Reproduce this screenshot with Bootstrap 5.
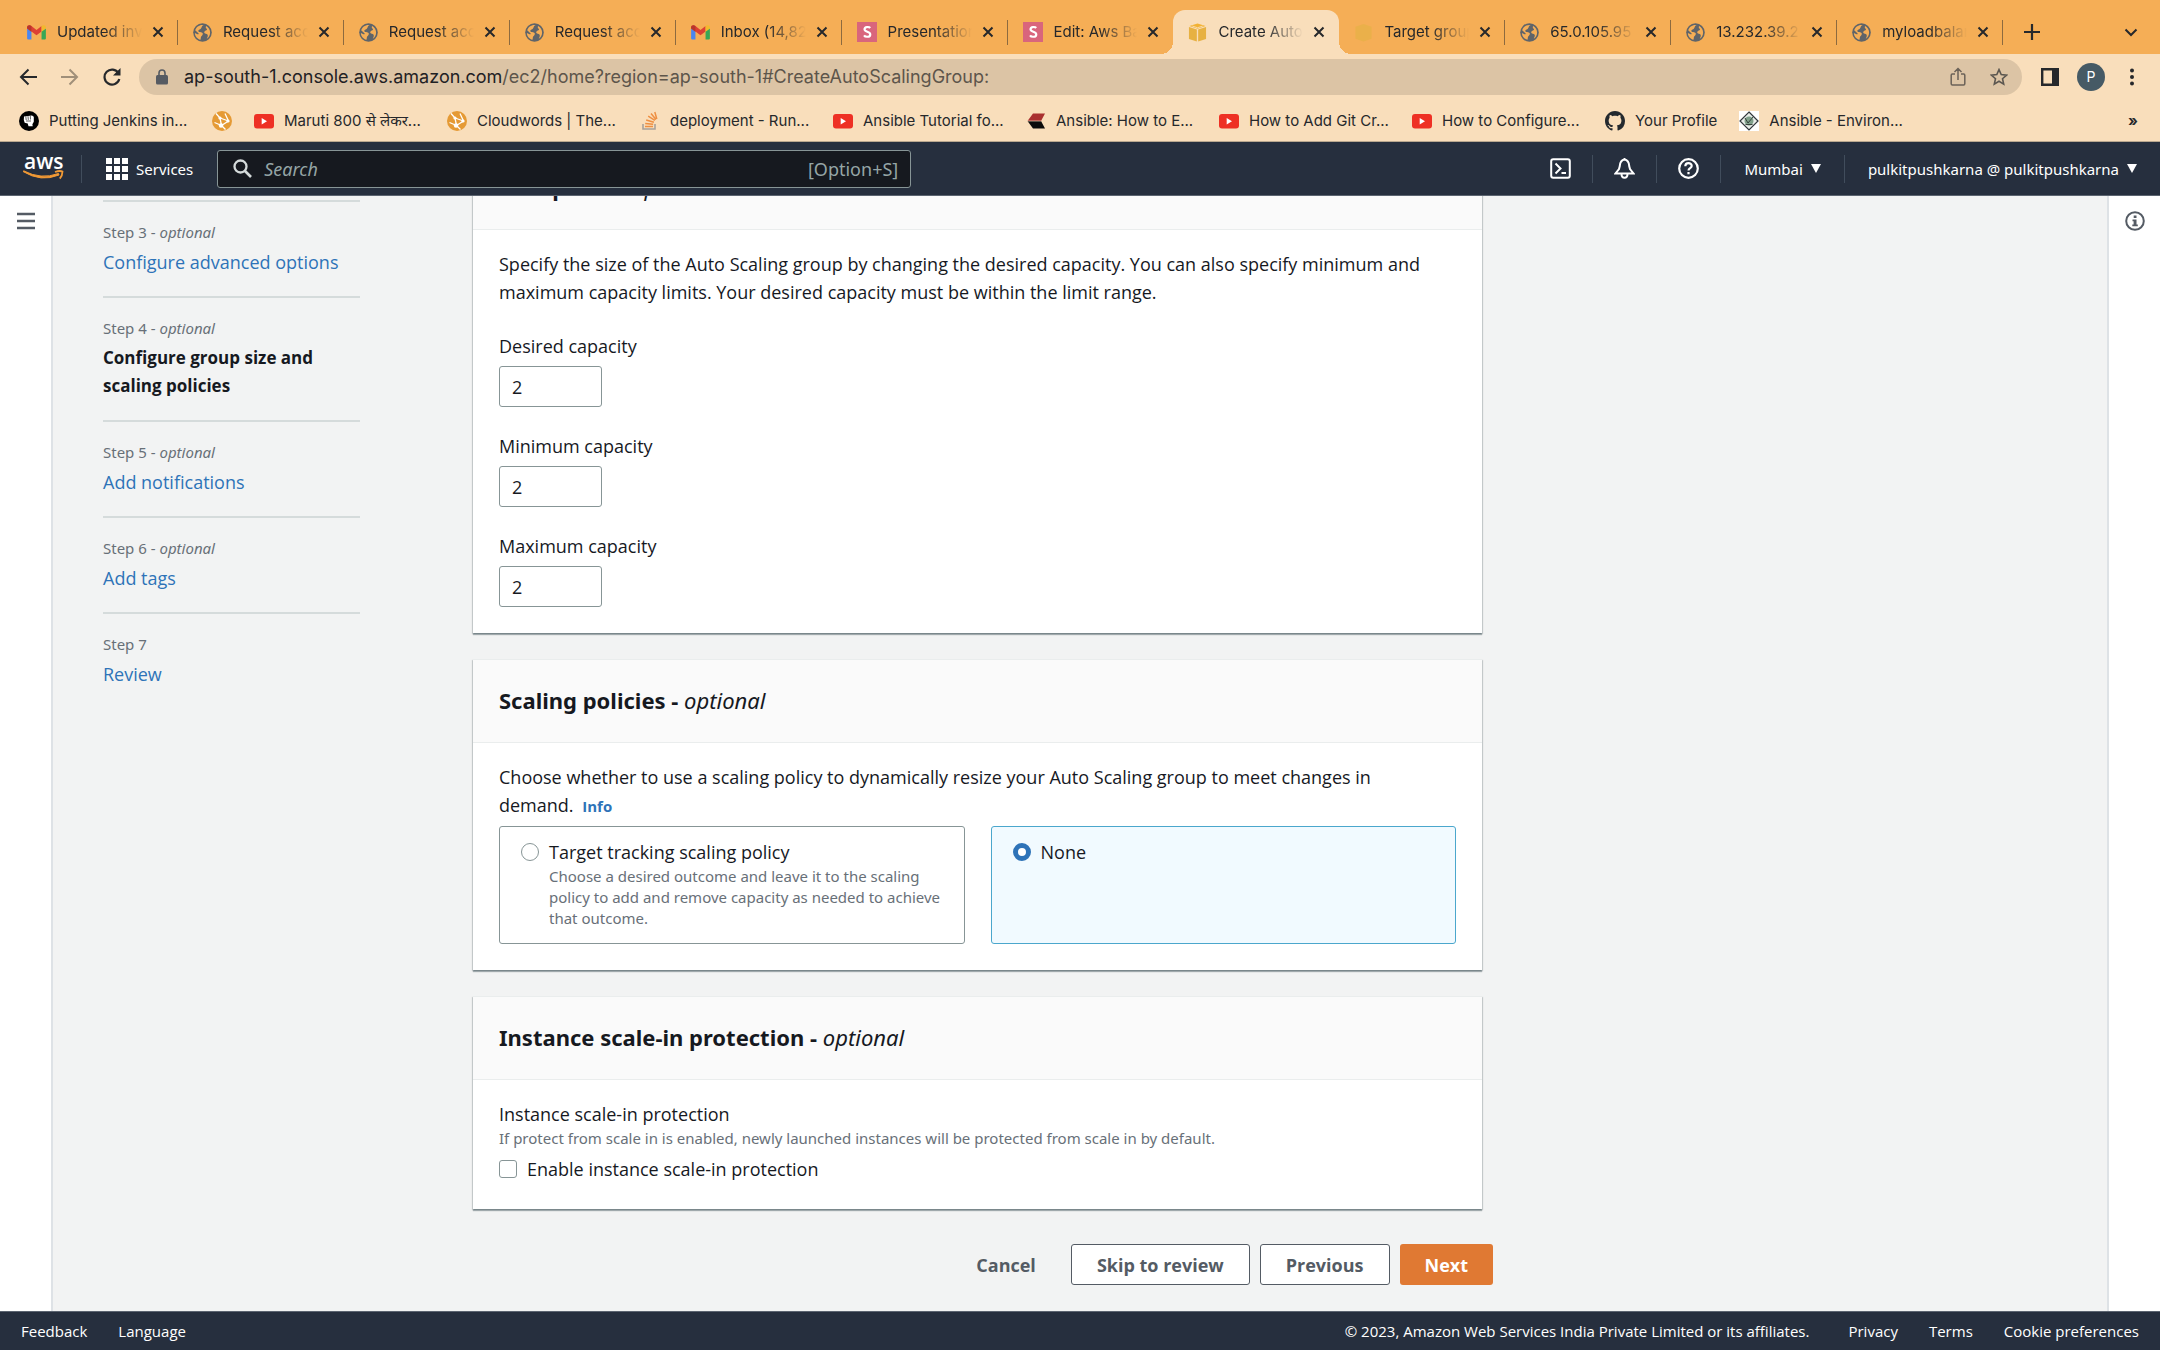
<!DOCTYPE html>
<html lang="en">
<head>
<meta charset="utf-8">
<meta name="viewport" content="width=device-width, initial-scale=1">
<title>Create Auto Scaling group</title>
<link href="https://cdn.jsdelivr.net/npm/bootstrap@5.3.0/dist/css/bootstrap.min.css" rel="stylesheet">
<style>
  :root { --ember: "Open Sans", "Noto Sans", sans-serif; --ember-small: "Noto Sans", "Open Sans", sans-serif; --sys: Inter, Roboto, "Noto Sans", sans-serif; }
  body { font-family: var(--ember); font-size: 18px; line-height: 28px; color: #16191f; background: #f2f3f3; }
  button { border: 0; background: none; padding: 0; color: inherit; }
  svg { display: block; flex: none; }

  /* browser chrome */
  .chrome { font-family: var(--sys); font-size: 15px; line-height: 20px; color: #26282b; }
  .tabstrip { height: 54px; background: #f5ae56; padding: 10px 18px 0 12px; }
  .tab-set { flex: 1; max-width: calc(100% - 139px); }
  .new-tab { margin-left: 21px; }
  .btab { flex: 1 1 0; min-width: 0; height: 44px; padding: 0 14px 0 15px; position: relative; color: inherit; }
  .btab::after { content: ""; position: absolute; right: 0; top: 10px; width: 1px; height: 25px; background: #8c6a3f; }
  .btab.plain::after { display: none; }
  .btab.current { background: #f9debb; border-radius: 12px 12px 0 0; }
  .btab.current::before, .btab.current::after { content: ""; display: block; position: absolute; top: auto; bottom: 0; width: 12px; height: 12px; }
  .btab.current::before { left: -12px; background: radial-gradient(circle at 0 0, transparent 12px, #f9debb 12px); }
  .btab.current::after { right: -12px; background: radial-gradient(circle at 100% 0, transparent 12px, #f9debb 12px); }
  .btab-text { flex: 1; min-width: 0; overflow: hidden; white-space: nowrap; margin: 0 10px 0 11px; color: inherit; text-decoration: none;
    -webkit-mask-image: linear-gradient(90deg, #000 55%, transparent); mask-image: linear-gradient(90deg, #000 55%, transparent); }
  .toolbar { background: #f9debb; height: 46px; padding: 0 25px 0 19px; }
  .omnibox { flex: 1; height: 36px; border-radius: 18px; background: #dcc4a5; padding: 0 14px 0 17px; margin: 0 19px 0 18px; }
  .url { font-size: 18px; color: #5d554b; flex: 1; }
  .url b { font-weight: 400; color: #1f2124; }
  .avatar { width: 28px; height: 28px; border-radius: 50%; background: #465a65; color: #fff; font-size: 14px; margin-left: 18px; }
  .bookmarks { background: #f9debb; height: 42px; border-bottom: 1px solid #b9a88f; padding: 0 22px 0 19px; gap: 22px; }
  .bookmarks a { color: inherit; text-decoration: none; gap: 10px; white-space: nowrap; }
  .bm-text { width: 141px; }
  .bm-text.fit { width: auto; }

  /* console header */
  .console { background: #262f3e; height: 54px; color: #fff; font-family: var(--ember-small); font-size: 15px; font-weight: 500; line-height: 24px; border-bottom: 1px solid #5b6470; padding: 0 21px 0 23px; }
  .console .rule { width: 1px; height: 28px; background: #414d5c; }
  .account { gap: 21px; }
  .account .menu { margin: 0 2px; }
  .search { width: 694px; height: 38px; background: #16191f; border: 1px solid #879596; border-radius: 3px; padding: 0 12px 0 15px; color: #95a5a6; font-size: 18px; font-weight: 400; }
  .search input { border: 0; background: none; outline: 0; padding: 0; flex: 1; min-width: 0; }
  .search input::placeholder { color: #95a5a6; font-style: italic; opacity: 1; }
  .tri { width: 0; border: 5px solid transparent; border-top: 9px solid #fff; border-bottom: 0; }

  /* page */
  .rail { width: 53px; background: #fff; flex: none; padding-top: 15px; }
  .steps { width: 257px; flex: none; padding-top: 4px; margin: 0 113px 0 50px; }
  .steps li { border-top: 2px solid #d5dbdb; padding: 18px 0 20px; }
  .steps li:last-child { padding-bottom: 0; }
  .steps small { display: block; font-family: var(--ember-small); font-size: 15px; line-height: 24px; margin-bottom: 4px; color: #687078; }
  .steps strong { display: block; font-size: 17px; }
  .steps a, .info { color: #2e73b8; text-decoration: none; }
  .info { font-size: 15px; font-weight: 700; margin-left: 4px; }
  .form-col { width: 1020px; margin-top: -50px; }
  .panel { background: #fff; margin: 0 11px 26px 0; box-shadow: 0 2px 1px 0 rgba(0,28,36,.3), 1px 1px 1px 0 rgba(0,28,36,.15), -1px 1px 1px 0 rgba(0,28,36,.15); }
  .panel-head { background: #fafafa; border-bottom: 1px solid #eaeded; padding: 24px 26px 25px; box-shadow: inset 0 1px 0 #eaeded; }
  .panel-head h2 { font-family: var(--ember-small); font-size: 22px; line-height: 34px; font-weight: 700; margin: 0; }
  .panel-head em { font-weight: 400; }
  .panel-body { padding: 20px 26px 26px; }
  .panel-body p { margin: 0; padding-right: 26px; }
  .cap { gap: 23px; }
  .cap label { display: block; line-height: 32px; margin-bottom: 4px; }
  .cap input { display: block; width: 103px; height: 41px; border: 1px solid #879596; border-radius: 3px; padding: 0 12px; background: #fff; color: inherit; }
  .hint { font-family: var(--ember-small); font-size: 15px; line-height: 21px; color: #687078; }
  .tiles { gap: 26px; margin-top: 6px; }
  .tile { flex: 1 1 0; min-height: 118px; border: 1px solid #879596; border-radius: 3px; padding: 11px 21px; gap: 10px; }
  .tile.on { background: #f1faff; border-color: #4ba7cd; }
  .tick { appearance: none; width: 18px; height: 18px; flex: none; margin: 5px 0 0; border: 1px solid #879596; background: #fff; border-radius: 3px; }
  .tick[type=radio] { border-radius: 50%; }
  .tick[type=radio]:checked { border: 5px solid #2e73b8; }
  .protect { gap: 10px; margin-top: 6px; }
  .actions { padding-top: 9px; gap: 10px; }
  .act { height: 41px; padding: 0 25px; font-weight: 700; border-radius: 3px; color: #545b64; }
  .act.line { border: 1px solid #545b64; background: #fff; }
  .act.go { background: #e07933; color: #fff; }
  .foot { background: #262f3e; height: 39px; font-size: 15px; font-weight: 500; border-top: 1px solid #5b6470; padding: 0 21px; gap: 31px; }
  .foot a, .foot span { color: #fff; text-decoration: none; line-height: 38px; }
</style>
</head>
<body class="vh-100 d-flex flex-column overflow-hidden">

<!-- shared icon shapes -->
<svg width="0" height="0" class="position-absolute" aria-hidden="true">
  <symbol id="gmail" viewBox="0 0 20 16"><path d="M0 2v12.500q0 1 1.200 1H4.600V7L0 3.500z" fill="#4a86f0"/><path d="M20 2v12.500q0 1-1.200 1H15.400V7L20 3.500z" fill="#38a756"/><path d="M0 2.500C0 .2 2.600-.6 4.600 1L10 5.200 15.400 1v5.800L10 11 4.600 6.800V7.300L0 3.800z" fill="#dd4034"/><path d="M15.400 1C17.400-.6 20 .2 20 2.500v1.300l-4.600 3.500z" fill="#f2b92c"/><path d="M0 2.500C0 .2 2.600-.6 4.600 1v6.200L0 3.800z" fill="#b8352b"/></symbol>
  <symbol id="globe" viewBox="0 0 20 20"><circle cx="10" cy="10" r="9.800" fill="#5f6469"/><path d="M11.500 2.200C8.500 3 9.800 5 8 6.200c-1.500 1-2.800.7-2.300 2.600.4 1.400 2.600.5 4 1.400 1.500 1 .2 2.600-.9 3.700-.8.800-.4 2.300-.9 3.800C4.300 16.700 2 13.800 2 10.500l2.700 1.300c1 .4 1.800-.3 1-1.100L2.300 7.600C3.400 4.200 6.500 1.600 11.500 2.200zM14 3.200c2.400 1.400 4 3.800 4 6.800 0 3-1.400 5.200-3.500 6.600.6-1.700 1.700-3.200.7-4.600-.8-1-2.400-.5-3.200-1.600-.7-1.200.5-2.300 1.700-2.600 1.300-.4 1.400-1 .4-1.900C13.300 5 13.200 4 14 3.200z" fill="#f5ae56"/></symbol>
  <symbol id="ess" viewBox="0 0 21 21"><path d="M0 0h21v21H0z" fill="#d9657c"/><path d="M13.800 6.300C12.800 4.900 8 4.600 7.900 7.600c0 3.200 6 2 6 5.400 0 3.200-5.200 3.100-6.500 1" fill="none" stroke="#fff" stroke-width="2.300"/></symbol>
  <symbol id="cube" viewBox="0 0 20 20"><path d="M10 .5l8.500 2.700L10 6 1.500 3.200z" fill="#f2b234"/><path d="M1 4.300l8.300 2.600v12.600L1 16.800zM19 4.300l-8.300 2.600v12.600l8.300-2.700z" fill="#e7b142"/><path d="M4.500 3.200L10 5l5.500-1.800M10 6.500V20" stroke="#f9debb" stroke-width=".9" fill="none"/></symbol>
  <symbol id="cubefaint" viewBox="0 0 20 20"><path d="M10 1l8.500 3v12.500L10 19.500l-8.500-3V4z" fill="#eab04a"/></symbol>
  <symbol id="ex" viewBox="0 0 12 12"><path d="M1.500 1.500l9 9m0-9l-9 9" stroke="#26282b" stroke-width="2"/></symbol>
  <symbol id="yt" viewBox="0 0 20 20"><rect y="3" width="20" height="14.500" rx="3" fill="#ee3024"/><path d="M7.700 6.900v6.600l5.300-3.300z" fill="#fff"/></symbol>
  <symbol id="net" viewBox="0 0 20 20"><circle cx="10" cy="10" r="10" fill="#e59a35"/><path d="M4 2.500l4 4.500 1.500 7.500L16.500 10 13 2.500M8 7l8.500 3M9.500 14.500L2.500 11.500M9.500 14.500l4 4" stroke="#fff" stroke-width="1.300" fill="none"/><circle cx="9" cy="14.500" r="2.200" fill="#fff"/><circle cx="16" cy="10" r="1.600" fill="#fff"/><circle cx="8" cy="7" r="1.600" fill="#fff"/></symbol>
</svg>

<header class="chrome flex-shrink-0">
  <nav class="tabstrip d-flex align-items-center" aria-label="Tabs">
    <div class="tab-set d-flex">
      <div class="btab d-flex align-items-center"><svg width="19" height="15"><use href="#gmail"/></svg><a href="#" class="btab-text">Updated invi</a><button aria-label="Close"><svg width="12" height="12"><use href="#ex"/></svg></button></div>
      <div class="btab d-flex align-items-center"><svg width="19" height="19"><use href="#globe"/></svg><a href="#" class="btab-text">Request acce</a><button aria-label="Close"><svg width="12" height="12"><use href="#ex"/></svg></button></div>
      <div class="btab d-flex align-items-center"><svg width="19" height="19"><use href="#globe"/></svg><a href="#" class="btab-text">Request acce</a><button aria-label="Close"><svg width="12" height="12"><use href="#ex"/></svg></button></div>
      <div class="btab d-flex align-items-center"><svg width="19" height="19"><use href="#globe"/></svg><a href="#" class="btab-text">Request acce</a><button aria-label="Close"><svg width="12" height="12"><use href="#ex"/></svg></button></div>
      <div class="btab d-flex align-items-center"><svg width="19" height="15"><use href="#gmail"/></svg><a href="#" class="btab-text">Inbox (14,82</a><button aria-label="Close"><svg width="12" height="12"><use href="#ex"/></svg></button></div>
      <div class="btab d-flex align-items-center"><svg width="20" height="20"><use href="#ess"/></svg><a href="#" class="btab-text">Presentation</a><button aria-label="Close"><svg width="12" height="12"><use href="#ex"/></svg></button></div>
      <div class="btab plain d-flex align-items-center"><svg width="20" height="20"><use href="#ess"/></svg><a href="#" class="btab-text">Edit: Aws Ba</a><button aria-label="Close"><svg width="12" height="12"><use href="#ex"/></svg></button></div>
      <div class="btab current d-flex align-items-center"><svg width="19" height="19"><use href="#cube"/></svg><a href="#" class="btab-text" aria-current="page">Create Auto</a><button aria-label="Close"><svg width="12" height="12"><use href="#ex"/></svg></button></div>
      <div class="btab d-flex align-items-center"><svg width="19" height="19"><use href="#cubefaint"/></svg><a href="#" class="btab-text">Target group</a><button aria-label="Close"><svg width="12" height="12"><use href="#ex"/></svg></button></div>
      <div class="btab d-flex align-items-center"><svg width="19" height="19"><use href="#globe"/></svg><a href="#" class="btab-text">65.0.105.95</a><button aria-label="Close"><svg width="12" height="12"><use href="#ex"/></svg></button></div>
      <div class="btab d-flex align-items-center"><svg width="19" height="19"><use href="#globe"/></svg><a href="#" class="btab-text">13.232.39.2</a><button aria-label="Close"><svg width="12" height="12"><use href="#ex"/></svg></button></div>
      <div class="btab d-flex align-items-center"><svg width="19" height="19"><use href="#globe"/></svg><a href="#" class="btab-text">myloadbalan</a><button aria-label="Close"><svg width="12" height="12"><use href="#ex"/></svg></button></div>
    </div>
    <button class="new-tab" aria-label="New tab"><svg width="16" height="16" viewBox="0 0 16 16"><path d="M8 0v16M0 8h16" stroke="#26282b" stroke-width="2.200"/></svg></button>
    <button class="ms-auto me-1" aria-label="Search tabs"><svg width="14" height="9" viewBox="0 0 14 9"><path d="M1.500 1.500L7 7l5.500-5.500" stroke="#26282b" stroke-width="2" fill="none"/></svg></button>
  </nav>

  <div class="toolbar d-flex align-items-center">
    <button aria-label="Back"><svg width="18" height="18" viewBox="0 0 18 18"><path d="M18 9H2M9.500 1.500L2 9l7.500 7.500" stroke="#26282b" stroke-width="2" fill="none"/></svg></button>
    <button class="ms-4" aria-label="Forward"><svg width="18" height="18" viewBox="0 0 18 18"><path d="M0 9h16M8.500 1.500L16 9l-7.500 7.500" stroke="#a08f79" stroke-width="2" fill="none"/></svg></button>
    <button class="ms-4" aria-label="Reload"><svg width="18" height="18" viewBox="0 0 18 18"><path d="M15.500 5.200A7.500 7.500 0 1 0 16.300 11" stroke="#26282b" stroke-width="2.200" fill="none"/><path d="M17.500 0v7.500H10z" fill="#26282b"/></svg></button>
    <div class="omnibox d-flex align-items-center">
      <svg width="12" height="16" viewBox="0 0 12 16"><rect y="6" width="12" height="9.500" rx="1.500" fill="#565b62"/><path d="M3 7V4a3 3 0 0 1 6 0v3" fill="none" stroke="#565b62" stroke-width="1.600"/></svg>
      <a href="#" class="url text-decoration-none ms-3 text-truncate"><b>ap-south-1.console.aws.amazon.com</b>/ec2/home?region=ap-south-1#CreateAutoScalingGroup:</a>
      <button aria-label="Share"><svg width="16" height="20" viewBox="0 0 16 20"><path d="M5 7H2.300Q1.200 7 1.200 8.200v8.600q0 1.200 1.200 1.200h11.200q1.200 0 1.200-1.200V8.200Q14.800 7 13.700 7H11M8 13V1.500M4.500 5L8 1.500 11.500 5" fill="none" stroke="#6b6258" stroke-width="1.500"/></svg></button>
      <button class="ms-4" aria-label="Bookmark this tab"><svg width="18" height="18" viewBox="0 0 18 18"><path d="M9 1.600l2.200 5 5.400.500-4.100 3.600 1.200 5.400L9 13.300l-4.700 2.800 1.200-5.400L1.400 7.100l5.400-.5z" fill="none" stroke="#5c5750" stroke-width="1.600"/></svg></button>
    </div>
    <button aria-label="Side panel"><svg width="18" height="18" viewBox="0 0 18 18"><path d="M1.200 1.200h15.600v15.600H1.200z" fill="none" stroke="#26282b" stroke-width="2.400"/><path d="M11 1h6v16h-6z" fill="#26282b"/></svg></button>
    <button class="avatar d-flex align-items-center justify-content-center">P</button>
    <button class="ms-4" aria-label="Menu"><svg width="6" height="18" viewBox="0 0 6 18" fill="#26282b"><circle cx="3" cy="2.500" r="2"/><circle cx="3" cy="9" r="2"/><circle cx="3" cy="15.500" r="2"/></svg></button>
  </div>

  <nav class="bookmarks d-flex align-items-center" aria-label="Bookmarks">
    <a href="#" class="d-flex align-items-center"><svg width="20" height="20" viewBox="0 0 20 20"><circle cx="10" cy="10" r="10"/><path d="M5 5.500l8-1 1.800 1.300v5l-1.400 2.400.300 2H9.500l-.8-2.700-3-.8-.9-2.800z" fill="#fff"/><path d="M6.800 5.500l.4 3.500M9 5.200l.3 3.700M11.300 5l.2 3.500M7 10h5" stroke="#000" stroke-width=".6"/></svg><span class="bm-text">Putting Jenkins in...</span></a>
    <a href="#" aria-label="Cloudwords"><svg width="20" height="20"><use href="#net"/></svg></a>
    <a href="#" class="d-flex align-items-center"><svg width="20" height="20"><use href="#yt"/></svg><span class="bm-text">Maruti 800 से लेकर...</span></a>
    <a href="#" class="d-flex align-items-center"><svg width="20" height="20"><use href="#net"/></svg><span class="bm-text">Cloudwords | The...</span></a>
    <a href="#" class="d-flex align-items-center"><svg width="20" height="20" viewBox="0 0 20 20"><path d="M3 13v5h12v-5" fill="none" stroke="#a8a19a" stroke-width="1.600"/><path d="M5 15.500h8M5.200 12.500l8 .8M6.200 9l7.700 2.200M8.200 5.200l6.700 4.200M11 2.500l5 6M14.800 1l2 7" stroke="#ee8f42" stroke-width="1.500"/></svg><span class="bm-text">deployment - Run...</span></a>
    <a href="#" class="d-flex align-items-center"><svg width="20" height="20"><use href="#yt"/></svg><span class="bm-text">Ansible Tutorial fo...</span></a>
    <a href="#" class="d-flex align-items-center"><svg width="20" height="20" viewBox="0 0 20 20"><path d="M7 2.500h12L15 10H1.500z" fill="#a9302f"/><path d="M1.500 10H15l4 7.500H7z" fill="#0c0c0c"/><path d="M1 10h14" stroke="#f9debb" stroke-width=".7"/></svg><span class="bm-text">Ansible: How to E...</span></a>
    <a href="#" class="d-flex align-items-center"><svg width="20" height="20"><use href="#yt"/></svg><span class="bm-text">How to Add Git Cr...</span></a>
    <a href="#" class="d-flex align-items-center"><svg width="20" height="20"><use href="#yt"/></svg><span class="bm-text">How to Configure...</span></a>
    <a href="#" class="d-flex align-items-center"><svg width="20" height="20" viewBox="0 0 16 16"><path fill="#24292e" d="M8 0C3.580 0 0 3.580 0 8c0 3.540 2.290 6.530 5.470 7.590.4.070.55-.17.55-.38 0-.19-.01-.82-.01-1.490-2.010.37-2.530-.49-2.690-.94-.09-.23-.48-.94-.82-1.130-.28-.15-.68-.52-.01-.53.63-.01 1.080.58 1.230.82.72 1.210 1.870.87 2.330.66.07-.52.28-.87.51-1.070-1.780-.2-3.640-.89-3.640-3.950 0-.87.31-1.590.82-2.150-.08-.2-.36-1.020.08-2.120 0 0 .67-.21 2.200.82.64-.18 1.320-.27 2-.27s1.360.09 2 .27c1.530-1.040 2.200-.82 2.200-.82.44 1.100.16 1.920.08 2.120.51.56.82 1.270.82 2.150 0 3.070-1.870 3.750-3.650 3.950.29.25.54.73.54 1.480 0 1.070-.01 1.930-.01 2.200 0 .21.15.46.55.38A8.010 8.010 0 0 0 16 8c0-4.420-3.580-8-8-8z"/></svg><span class="bm-text fit">Your Profile</span></a>
    <a href="#" class="d-flex align-items-center"><svg width="20" height="20" viewBox="0 0 20 20"><path d="M0 0h20v20H0z" fill="#fff"/><path d="M10 1l9 9-9 9-9-9z" fill="#e8ece8" stroke="#30363a" stroke-width="1.200"/><circle cx="10" cy="10" r="4.500" fill="#7fa08a"/><path d="M6 7l3 5 5-6M6.500 13.500h7" stroke="#39443d" fill="none"/></svg><span class="bm-text">Ansible - Environ...</span></a>
    <button class="ms-auto fw-bold" aria-label="More bookmarks">»</button>
  </nav>
</header>

<div class="console d-flex align-items-center flex-shrink-0">
  <a href="#" aria-label="AWS"><svg width="42" height="30" viewBox="0 0 42 30"><text x="1" y="15" font-family="Open Sans" font-size="21" font-weight="600" fill="#fff">aws</text><path d="M0 17.500Q18 28.500 36 21l-.5-1.500Q18 26 .6 16.800z" fill="#f29a35" stroke="#f29a35"/><path d="M32 18q5-1.800 7.500-.4 0 4-2.700 7" stroke="#f29a35" stroke-width="1.800" fill="none"/></svg></a>
  <span class="rule mx-3"></span>
  <button class="d-flex align-items-center ms-2"><svg width="22" height="22" viewBox="0 0 22 22" fill="#fff"><path d="M0 0h6v6H0zM8 0h6v6H8zM16 0h6v6h-6zM0 8h6v6H0zM8 8h6v6H8zM16 8h6v6h-6zM0 16h6v6H0zM8 16h6v6H8zM16 16h6v6h-6z"/></svg><span class="ms-2">Services</span></button>
  <label class="search d-flex align-items-center ms-4">
    <svg width="19" height="19" viewBox="0 0 19 19"><circle cx="7.500" cy="7.500" r="6" fill="none" stroke="#d5dbdb" stroke-width="2.300"/><path d="M12 12l6 6" stroke="#d5dbdb" stroke-width="2.600"/></svg>
    <input class="ms-2 ps-1" type="text" placeholder="Search" aria-label="Search">
    <span>[Option+S]</span>
  </label>
  <div class="account d-flex align-items-center ms-auto">
    <button aria-label="CloudShell"><svg width="21" height="21" viewBox="0 0 21 21" fill="none" stroke="#fff" stroke-width="2"><rect x="1.200" y="1.200" width="18.600" height="18.600" rx="2"/><path d="M5.500 5.500l5 5-5 5M11.500 15h4.500"/></svg></button>
    <span class="rule"></span>
    <button aria-label="Notifications"><svg width="21" height="21" viewBox="0 0 21 21" fill="none" stroke="#fff" stroke-width="2"><path d="M10.500 1.500c-3 .5-4.500 3-4.700 6.500L5 11l-3.500 4.500h18L16 11l-.8-3c-.2-3.500-1.700-6-4.700-6.500zM10.500 0v2M7.500 16c0 5 6 5 6 0"/></svg></button>
    <span class="rule"></span>
    <button aria-label="Help"><svg width="21" height="21" viewBox="0 0 21 21" fill="none" stroke="#fff" stroke-width="2.200"><circle cx="10.500" cy="10.500" r="9.300"/><path d="M7.300 8.300c0-4.200 6.400-4 6.400-.3 0 2.200-3.200 2.200-3.200 4.500M10.500 14v2.300"/></svg></button>
    <span class="rule"></span>
    <button class="menu d-flex align-items-center gap-2">Mumbai <span class="tri"></span></button>
    <span class="rule"></span>
    <button class="menu d-flex align-items-center gap-2">pulkitpushkarna @ pulkitpushkarna <span class="tri"></span></button>
  </div>
</div>

<div class="d-flex flex-grow-1 overflow-hidden">
  <aside class="rail border-end border-2 d-flex justify-content-center align-items-start">
    <button aria-label="Open menu"><svg width="18" height="20" viewBox="0 0 18 20"><path d="M0 3h18M0 10h18M0 17h18" stroke="#545b64" stroke-width="2.400"/></svg></button>
  </aside>

  <main class="flex-grow-1 d-flex align-items-start">
    <ol class="steps list-unstyled">
      <li><small>Step 3 - <em>optional</em></small><a href="#">Configure advanced options</a></li>
      <li><small>Step 4 - <em>optional</em></small><strong>Configure group size and scaling policies</strong></li>
      <li><small>Step 5 - <em>optional</em></small><a href="#">Add notifications</a></li>
      <li><small>Step 6 - <em>optional</em></small><a href="#">Add tags</a></li>
      <li><small>Step 7</small><a href="#">Review</a></li>
    </ol>

    <form class="form-col">
      <section class="panel">
        <div class="panel-head"><h2>Group size - <em>optional</em></h2></div>
        <div class="panel-body">
          <p>Specify the size of the Auto Scaling group by changing the desired capacity. You can also specify minimum and maximum capacity limits. Your desired capacity must be within the limit range.</p>
          <div class="cap d-flex flex-column mt-4">
            <div><label for="c1">Desired capacity</label><input id="c1" type="text" value="2"></div>
            <div><label for="c2">Minimum capacity</label><input id="c2" type="text" value="2"></div>
            <div><label for="c3">Maximum capacity</label><input id="c3" type="text" value="2"></div>
          </div>
        </div>
      </section>

      <section class="panel">
        <div class="panel-head"><h2>Scaling policies - <em>optional</em></h2></div>
        <div class="panel-body">
          <p>Choose whether to use a scaling policy to dynamically resize your Auto Scaling group to meet changes in demand. <a href="#" class="info">Info</a></p>
          <div class="tiles d-flex">
            <label class="tile d-flex align-items-start"><input class="tick" type="radio" name="pol"><span>Target tracking scaling policy<span class="hint d-block">Choose a desired outcome and leave it to the scaling policy to add and remove capacity as needed to achieve that outcome.</span></span></label>
            <label class="tile on d-flex align-items-start"><input class="tick" type="radio" name="pol" checked><span>None</span></label>
          </div>
        </div>
      </section>

      <section class="panel">
        <div class="panel-head"><h2>Instance scale-in protection - <em>optional</em></h2></div>
        <div class="panel-body">
          <p>Instance scale-in protection</p>
          <p class="hint">If protect from scale in is enabled, newly launched instances will be protected from scale in by default.</p>
          <label class="protect d-flex align-items-start"><input class="tick" type="checkbox"><span>Enable instance scale-in protection</span></label>
        </div>
      </section>

      <div class="actions d-flex justify-content-end">
        <button type="button" class="act">Cancel</button>
        <button type="button" class="act line">Skip to review</button>
        <button type="button" class="act line">Previous</button>
        <button type="button" class="act go">Next</button>
      </div>
    </form>
  </main>

  <aside class="rail border-start border-2 d-flex justify-content-center align-items-start">
    <button aria-label="Info panel"><svg width="20" height="20" viewBox="0 0 20 20"><circle cx="10" cy="10" r="8.800" fill="none" stroke="#545b64" stroke-width="2"/><path d="M8.700 4.500h2.800v2.400H8.700zM7.500 8.500h4v5h1.300v1.700H7.300v-1.700h1.300v-3.300H7.500z" fill="#545b64"/></svg></button>
  </aside>
</div>

<footer class="foot d-flex align-items-center flex-shrink-0">
  <a href="#">Feedback</a><a href="#">Language</a>
  <span class="ms-auto me-2">© 2023, Amazon Web Services India Private Limited or its affiliates.</span>
  <a href="#">Privacy</a><a href="#">Terms</a><a href="#">Cookie preferences</a>
</footer>
<script src="https://cdn.jsdelivr.net/npm/bootstrap@5.3.0/dist/js/bootstrap.bundle.min.js"></script>
</body>
</html>
